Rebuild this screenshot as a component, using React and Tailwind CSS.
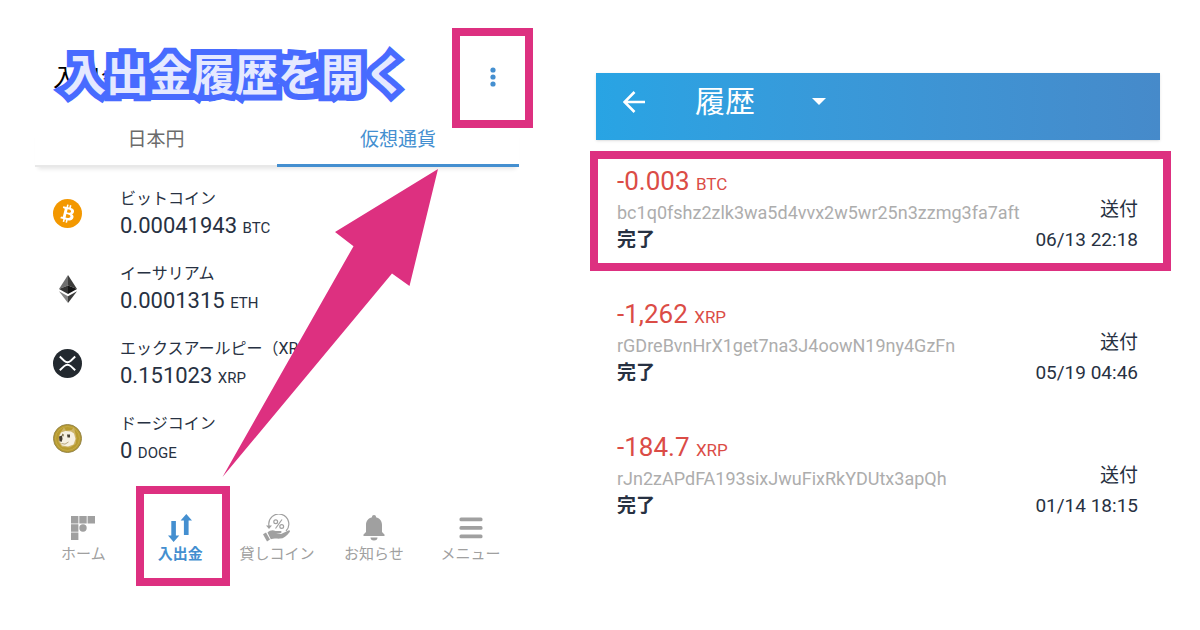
import clsx from "clsx"

const coins = [
  { name: "ビットコイン", amount: "0.00041943", unit: "BTC", Icon: BitcoinIcon },
  { name: "イーサリアム", amount: "0.0001315", unit: "ETH", Icon: EthereumIcon },
  { name: "エックスアールピー（XRP）", amount: "0.151023", unit: "XRP", Icon: XrpIcon },
  { name: "ドージコイン", amount: "0", unit: "DOGE", Icon: DogeIcon }
]

const navItems = [
  { label: "ホーム", Icon: HomeIcon },
  { label: "入出金", Icon: TransferIcon, active: true },
  { label: "貸しコイン", Icon: LendIcon },
  { label: "お知らせ", Icon: BellIcon },
  { label: "メニュー", Icon: MenuIcon }
]

const transactions = [
  {
    amount: "-0.003",
    unit: "BTC",
    address: "bc1q0fshz2zlk3wa5d4vvx2w5wr25n3zzmg3fa7aft",
    date: "06/13 22:18",
    highlighted: true
  },
  {
    amount: "-1,262",
    unit: "XRP",
    address: "rGDreBvnHrX1get7na3J4oowN19ny4GzFn",
    date: "05/19 04:46"
  },
  {
    amount: "-184.7",
    unit: "XRP",
    address: "rJn2zAPdFA193sixJwuFixRkYDUtx3apQh",
    date: "01/14 18:15"
  }
]

function BitcoinIcon() {
  return (
    <svg viewBox="0 0 32 32" className="size-[29px]" aria-hidden="true">
      <circle cx="16" cy="16" r="16" fill="#f39800" />
      <path
        fill="#fff"
        d="M23.2 14c.3-2.100-1.300-3.300-3.500-4l.7-2.900-1.700-.4-.7 2.800-1.400-.3.700-2.800-1.700-.4-.7 2.900-3.500-.9-.5 1.900s1.300.3 1.200.3c.7.200.8.600.8 1l-2 8c-.1.200-.3.500-.8.400 0 0-1.200-.3-1.200-.3l-.9 2 3.400.8-.7 3 1.700.4.700-2.900 1.400.4-.7 2.900 1.700.4.700-2.900c3 .6 5.200.3 6.200-2.300.7-2.200 0-3.400-1.600-4.200 1.100-.3 2-1 2.200-2.600zm-4 5.600c-.5 2.200-4.100 1-5.300.7l.9-3.800c1.200.3 5 .9 4.400 3.100zm.6-5.600c-.5 2-3.500 1-4.500.7l.9-3.400c1 .2 4.200.7 3.600 2.700z"
      />
    </svg>
  )
}

function EthereumIcon() {
  return (
    <svg viewBox="0 0 18 28" className="h-7 w-[18px]" aria-hidden="true">
      <path d="M9 0 0 14 9 10.500z" fill="#707070" />
      <path d="M9 0 18 14 9 10.500z" fill="#3c3c3b" />
      <path d="M0 14 9 10.500V19z" fill="#343434" />
      <path d="M18 14 9 10.500V19z" fill="#141414" />
      <path d="M0 16.200 9 28v-6.800z" fill="#858585" />
      <path d="M18 16.200 9 28v-6.800z" fill="#3c3c3b" />
    </svg>
  )
}

function XrpIcon() {
  return (
    <svg viewBox="0 0 29 29" className="size-[29px]" aria-hidden="true">
      <circle cx="14.500" cy="14.500" r="14.500" fill="#23292f" />
      <g fill="none" stroke="#fff" strokeWidth="1.900">
        <path d="M6.800 7.500 11.200 11.700Q14.500 14.600 17.800 11.700L22.200 7.500" />
        <path d="M6.800 21.300 11.200 17.100Q14.500 14.200 17.800 17.100L22.200 21.300" />
      </g>
    </svg>
  )
}

function DogeIcon() {
  return (
    <svg viewBox="0 0 29 29" className="size-[29px]" aria-hidden="true">
      <circle cx="14.500" cy="14.500" r="14" fill="#b89b30" stroke="#94854a" />
      <circle cx="14.500" cy="14.500" r="12" fill="none" stroke="#c4ab48" />
      <path d="M8.500 7 11 3.500 13 6.500 18.500 6 21 3 22 8 23.500 14 22.500 20 17 23.500 9 23 5.500 18 6 11z" fill="#cdb468" />
      <path d="M8 8.500 12.500 7 18 7.500 21 9.500 22.500 15 20.500 20.500 15 22.500 9 21.500 6.500 17 6.500 12z" fill="#f6f0e2" />
      <path d="M6 12.500 9 11.500 9.500 15 8.500 18 6.500 17z" fill="#453c32" />
      <path d="M9 9.500 11 10.500 10.500 12.500 9 12z" fill="#8a7d58" />
      <path d="M14 10.500h3v3h-2.500z" fill="#4b4336" />
      <path d="M8.500 19.500Q12 21.500 15.500 18" fill="none" stroke="#b7a67e" />
    </svg>
  )
}

function HomeIcon() {
  return (
    <svg viewBox="0 0 24 24" className="size-6" fill="currentColor" aria-hidden="true">
      <path d="M0 0h7.400v7.400H0zM8.300 0h7.400v7.400H8.300zM16.600 0H24v7.400h-7.400zM0 8.300h7.400v7.400H0zM0 16.600h7.400V24H0z" />
      <circle cx="12" cy="12" r="3.700" />
    </svg>
  )
}

function TransferIcon() {
  return (
    <svg viewBox="0 0 24 28" className="h-7 w-6" fill="currentColor" aria-hidden="true">
      <path d="M3.300 7h4.600v14.500h3.400L5.600 28 0 21.500h3.300zM15.900 21V6.500h-3.300L18.300 0 24 6.500h-3.400V21z" />
    </svg>
  )
}

function LendIcon() {
  return (
    <svg viewBox="0 0 28 28" className="size-7" fill="none" stroke="currentColor" aria-hidden="true">
      <path d="M6 12A10 10 0 1 1 23 17" strokeWidth="1.200" />
      <path d="M3 11.500h6L6 15z" fill="currentColor" stroke="none" />
      <path d="m12.500 14.500 6.500-9" strokeWidth="1.200" />
      <circle cx="12.700" cy="7.700" r="1.900" strokeWidth="1.200" />
      <circle cx="18.700" cy="12.500" r="1.900" strokeWidth="1.200" />
      <path d="m0 20.200 3-1.700 4 7-3 2z" fill="currentColor" stroke="none" />
      <path
        d="M4.500 18.500C7 16 10 15.500 12.500 17h5c1.500 0 1.500 2-.2 2.200l-4.300.3 5 .4 7.500-3.500c1.200-.4 2 .600 1.200 1.500-3 4-6.200 6.600-9.700 6.700-3 .2-6-.7-9.200.6z"
        fill="currentColor"
        stroke="none"
      />
    </svg>
  )
}

function BellIcon() {
  return (
    <svg viewBox="0 0 22 26" className="h-[26px] w-[22px]" fill="currentColor" aria-hidden="true">
      <path d="M11 0a2 2 0 0 1 2 2.200c3.700.8 6 3.800 6 7.800v7l2.500 2.500V21H.5v-1.500L3 17v-7c0-4 2.300-7 6-7.800A2 2 0 0 1 11 0zM7.500 22.500h7a3.500 3 0 0 1-7 0z" />
    </svg>
  )
}

function MenuIcon() {
  return (
    <svg viewBox="0 0 24 22" className="h-[22px] w-6" fill="currentColor" aria-hidden="true">
      <rect x=".5" y=".5" width="23" height="3.800" rx="1.500" />
      <rect x=".5" y="9" width="23" height="3.800" rx="1.500" />
      <rect x=".5" y="17.500" width="23" height="3.800" rx="1.500" />
    </svg>
  )
}

function WalletScreen() {
  return (
    <section className="relative">
      <header className="relative -mr-[14px] flex items-center justify-between pl-[18px]">
        <h1 className="text-2xl font-normal text-black">入出金</h1>
        <button
          type="button"
          aria-label="メニューを開く"
          className="flex h-[100px] w-[81px] items-center justify-center border-8 border-[#dd3080] pb-[2px] text-[#448fd0]"
        >
          <svg viewBox="0 0 6 20" className="h-5 w-[6px]" fill="currentColor" aria-hidden="true">
            <circle cx="3" cy="3" r="2.600" />
            <circle cx="3" cy="10" r="2.600" />
            <circle cx="3" cy="17" r="2.600" />
          </svg>
        </button>
        <p className="absolute top-4 left-7 text-[43px] leading-[64px] font-bold whitespace-nowrap text-[#e5e9ff] [-webkit-text-stroke:12px_#486bff] [paint-order:stroke_fill]">
          入出金履歴を開く
        </p>
      </header>

      <div
        role="tablist"
        className="grid grid-cols-2 text-[19px] shadow-[0_5px_4px_-3px_rgba(0,0,0,0.1)]"
      >
        <button
          type="button"
          role="tab"
          aria-selected="false"
          className="h-[39px] border-b-2 border-[#e8e8e8] pb-[13px] leading-[22px] text-[#6b6b6b]"
        >
          日本円
        </button>
        <button
          type="button"
          role="tab"
          aria-selected="true"
          className="h-[39px] border-b-3 border-[#448fd0] pb-3 leading-[22px] text-[#448fd0]"
        >
          仮想通貨
        </button>
      </div>

      <ul className="mt-[9px] text-[#273142]">
        {coins.map(({ name, amount, unit, Icon }) => (
          <li key={name} className="flex h-[75px] items-center">
            <div className="flex w-[85px] shrink-0 justify-center pr-5">
              <Icon />
            </div>
            <div className="pt-[3px] whitespace-nowrap">
              <p className="text-base leading-6">{name}</p>
              <p className="text-[22px] leading-[30px]">
                {amount} <span className="text-[15px]">{unit}</span>
              </p>
            </div>
          </li>
        ))}
      </ul>

      <nav className="mt-[10px] grid grid-cols-5">
        {navItems.map(({ label, Icon, active }) => (
          <a
            key={label}
            href="#"
            className={clsx(
              "relative flex h-[100px] flex-col items-center pt-7 text-[15px] whitespace-nowrap",
              active ? "font-bold text-[#448fd0]" : "text-[#a0a0a0]"
            )}
          >
            <span className="flex h-7 items-center">
              <Icon />
            </span>
            <span className="leading-6">{label}</span>
            {active && <span className="absolute inset-y-0 -right-px left-1 border-8 border-[#dd3080]" />}
          </a>
        ))}
      </nav>

      <svg
        viewBox="0 0 220 310"
        className="pointer-events-none absolute top-[140px] left-[187px] h-[310px] w-[220px]"
        aria-hidden="true"
      >
        <path d="M216 1 113 64l18.500 14.200L.5 309 170 105.500l17.500 12.500z" fill="#dd3080" />
      </svg>
    </section>
  )
}

function HistoryScreen() {
  return (
    <section className="pt-[45px]">
      <header className="mr-[11px] ml-[6px] flex h-[67px] items-center bg-linear-to-r from-[#28a4e4] to-[#468aca] pb-[10px] text-white shadow">
        <button type="button" aria-label="戻る" className="ml-[27px]">
          <svg viewBox="0 0 22 22" className="size-[22px]" fill="none" stroke="currentColor" strokeWidth="2.600" aria-hidden="true">
            <path d="M22 11H2M11.500 1 1.500 11l10 10" />
          </svg>
        </button>
        <h2 className="ml-[50px] text-[30px] leading-10">履歴</h2>
        <button type="button" aria-label="絞り込み" className="ml-[57px]">
          <svg viewBox="0 0 14 7" className="h-[7px] w-[14px]" fill="currentColor" aria-hidden="true">
            <path d="M0 0h14L7 7z" />
          </svg>
        </button>
      </header>

      <ul className="mt-[11px] flex flex-col gap-[13px] text-[#273142]">
        {transactions.map(({ amount, unit, address, date, highlighted }) => (
          <li
            key={address}
            className={clsx(
              "flex h-[120px] items-end justify-between border-8 pr-[25px] pb-[9px] pl-[19px]",
              highlighted ? "border-[#dd3080]" : "border-transparent"
            )}
          >
            <div>
              <p className="text-[26px] leading-8 text-[#db4c46]">
                {amount} <span className="text-[17px]">{unit}</span>
              </p>
              <p className="text-[18px] leading-[26px] text-[#adadad]">{address}</p>
              <p className="text-[19px] leading-7 font-bold">完了</p>
            </div>
            <div className="text-right text-[19px]">
              <p className="leading-8">送付</p>
              <p className="leading-7">{date}</p>
            </div>
          </li>
        ))}
      </ul>
    </section>
  )
}

export default function App() {
  return (
    <main className="grid min-h-screen grid-cols-[484fr_581fr] gap-[71px] bg-white pt-7 pr-[29px] pl-[35px] font-[Roboto,'Noto_Sans_CJK_JP',sans-serif]">
      <WalletScreen />
      <HistoryScreen />
    </main>
  )
}
